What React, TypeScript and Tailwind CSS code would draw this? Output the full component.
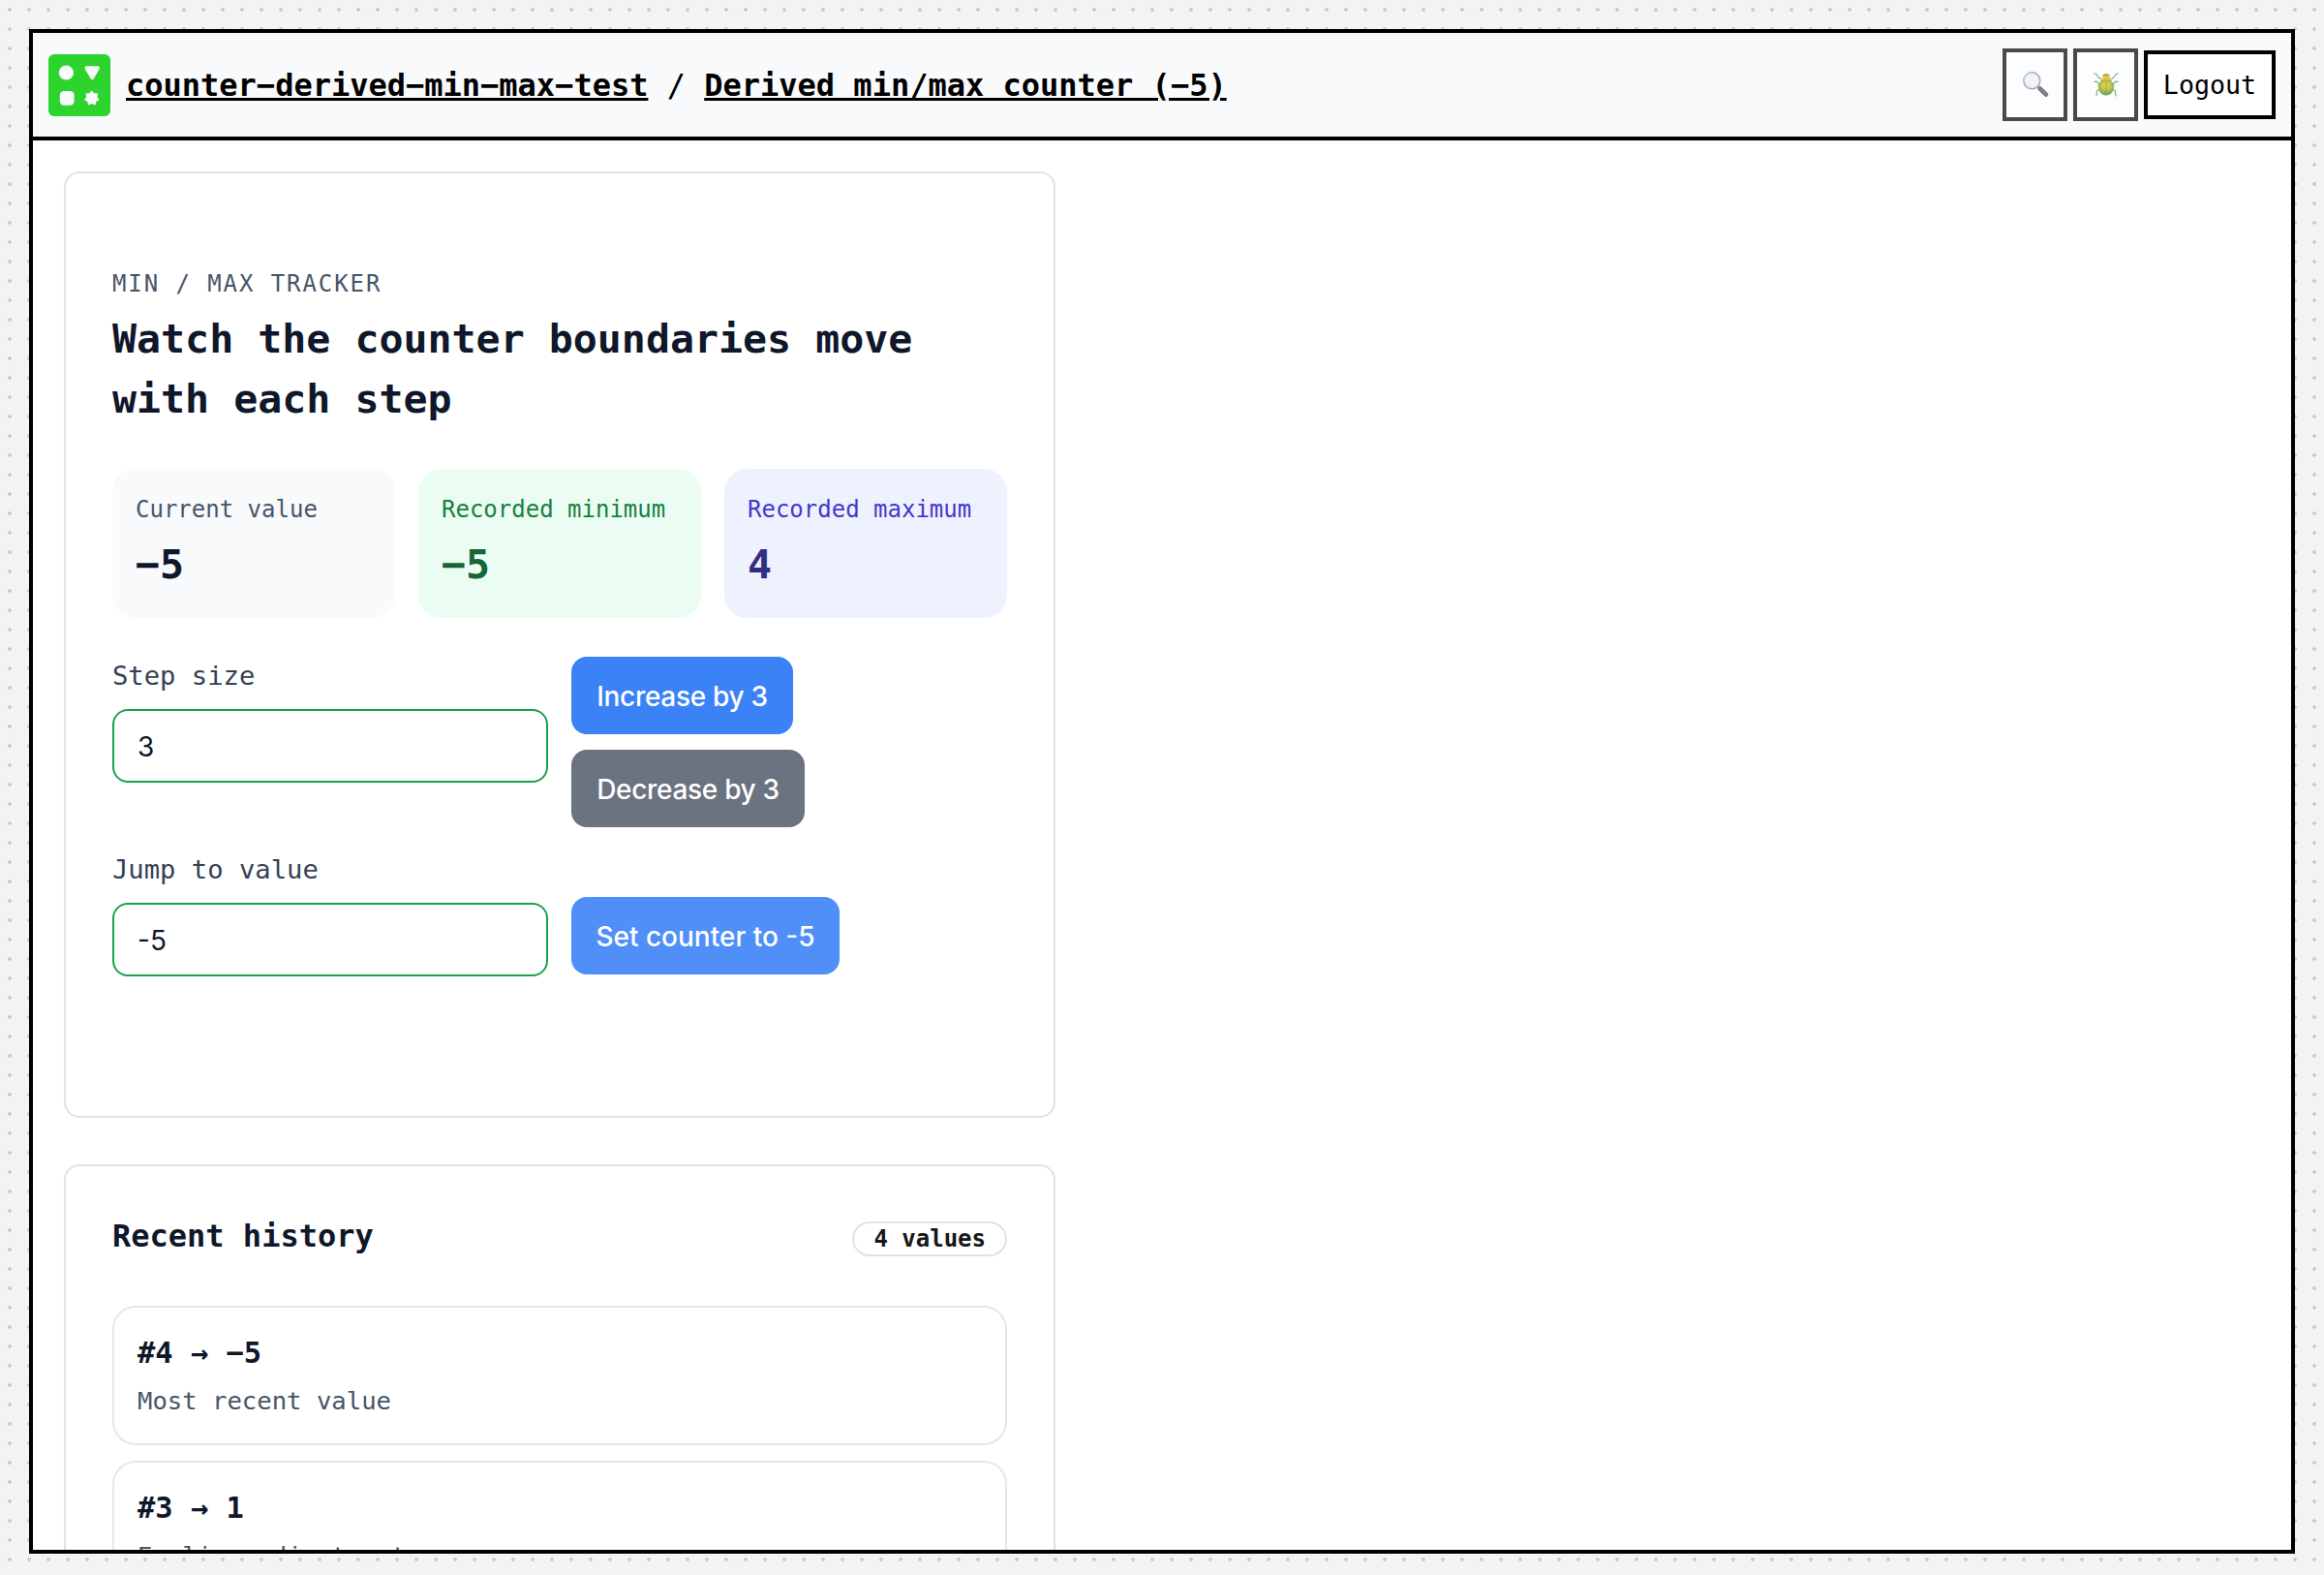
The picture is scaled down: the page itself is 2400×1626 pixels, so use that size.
import type { ReactNode } from "react";

function Logo() {
  return (
    <svg viewBox="0 0 64 64" className="size-16 shrink-0">
      <rect width="64" height="64" rx="6" fill="#2dd42d" />
      <g fill="#f8fafc" stroke="#f8fafc" strokeLinejoin="round">
        <circle cx="18.4" cy="19" r="7.6" stroke="none" />
        <path d="M39.2 14 L51.2 14 L45.2 24.3 Z" strokeWidth="3.6" />
        <rect x="11.8" y="38" width="14.8" height="14.8" rx="4.2" stroke="none" />
        <path
          d="M44.8 38.4 L47 40.9 L50.3 41 L49.7 44.3 L51.6 47 L48.7 48.5 L47.8 51.7 L44.8 50.4 L41.8 51.7 L40.9 48.5 L38 47 L39.9 44.3 L39.3 41 L42.6 40.9 Z"
          strokeWidth="1.4"
        />
      </g>
    </svg>
  );
}

function MagnifierIcon() {
  return (
    <svg viewBox="0 0 28 28" className="size-7">
      <defs>
        <linearGradient id="rim" x1="0" y1="0" x2="1" y2="1">
          <stop offset="0" stopColor="#a9bdd6" />
          <stop offset="0.4" stopColor="#85898e" />
          <stop offset="1" stopColor="#7f8285" />
        </linearGradient>
        <linearGradient id="grip" gradientUnits="userSpaceOnUse" x1="20.2" y1="22.4" x2="23.8" y2="18.6">
          <stop offset="0" stopColor="#17191a" />
          <stop offset="0.5" stopColor="#5c6064" />
          <stop offset="1" stopColor="#1c1e20" />
        </linearGradient>
      </defs>
      <path d="M16 14.6 L19 17.6" stroke="#777b7f" strokeWidth="2" />
      <path d="M18.6 17.4 L25 23.6" stroke="url(#grip)" strokeWidth="4.4" strokeLinecap="round" />
      <circle cx="10.3" cy="9.2" r="8.5" fill="#eff1f4" stroke="url(#rim)" strokeWidth="1.5" />
    </svg>
  );
}

function BeetleIcon() {
  return (
    <svg viewBox="0 0 28 28" className="size-7">
      <defs>
        <radialGradient id="shell" cx="0.5" cy="0.3" r="0.7">
          <stop offset="0" stopColor="#f3c300" />
          <stop offset="0.4" stopColor="#b3b400" />
          <stop offset="0.75" stopColor="#559a10" />
          <stop offset="1" stopColor="#2b7d12" />
        </radialGradient>
      </defs>
      <g fill="none" stroke="#5f8f42" strokeWidth="1.2" strokeLinecap="round" strokeLinejoin="round">
        <path d="M8.4 7.4 L5.4 5.2 L4.2 2.8 L1.8 1.8" />
        <path d="M19.6 7.4 L22.6 5.2 L23.8 2.8 L26.2 1.8" />
        <path d="M6.4 12.6 L4.4 10.2 L2 10.4" />
        <path d="M21.6 12.6 L23.6 10.2 L26 10.4" />
        <path d="M7 18.4 L4.4 19.8 L4.6 22.6 L3.8 25" />
        <path d="M21 18.4 L23.6 19.8 L23.4 22.6 L24.2 25" />
      </g>
      <path d="M10.2 4.8 C10.4 1 17.6 1 17.8 4.8 Z" fill="#6f8f12" />
      <path d="M8.6 9.8 C8.8 2.8 19.2 2.8 19.4 9.8 Z" fill="#dcb400" />
      <path
        d="M5.8 13 C6 8.2 22 8.2 22.2 13 C22.8 18.8 19.6 24.6 14 24.6 C8.4 24.6 5.2 18.8 5.8 13 Z"
        fill="url(#shell)"
      />
      <path d="M14 10.4 V23.8" stroke="#7a5c00" strokeWidth="0.7" />
      <path d="M8 10 C11 8.8 17 8.8 20 10" fill="none" stroke="#4f7a10" strokeWidth="0.9" />
    </svg>
  );
}

function IconButton({ label, children }: { label: string; children: ReactNode }) {
  return (
    <button
      aria-label={label}
      className="flex h-[75px] w-[67px] items-center justify-center border-4 border-black bg-white opacity-70"
    >
      {children}
    </button>
  );
}

function Stat({ label, value, box, labelColor, valueColor }: {
  label: string;
  value: string;
  box: string;
  labelColor: string;
  valueColor: string;
}) {
  return (
    <div className={`flex h-[154px] flex-col gap-2 rounded-3xl p-6 ${box}`}>
      <div className={`text-[24px] leading-[36px] whitespace-nowrap ${labelColor}`}>{label}</div>
      <div className={`text-[41.6px] leading-[62.4px] font-bold ${valueColor}`}>{value}</div>
    </div>
  );
}

function Field({ label, value }: { label: string; value: string }) {
  return (
    <label className="flex flex-col">
      <span className="text-[27.2px] leading-[40.8px] text-[#334155]">{label}</span>
      <span className="mt-[13.2px] flex h-[76px] items-center rounded-2xl border-2 border-[#16a34a] px-6 pt-0.5 font-[Inter,sans-serif] text-[28px] text-[#0f172a]">
        {value}
      </span>
    </label>
  );
}

const history = [
  { title: "#4 → −5", note: "Most recent value" },
  { title: "#3 → 1", note: "Earlier adjustment" },
];

export default function App() {
  return (
    <div className="h-[1626px] w-[2400px] overflow-hidden bg-[#f3f3f3] bg-[radial-gradient(circle,#cccccc_2px,transparent_2px)] bg-[size:20px_20px] p-[30px] font-['DejaVu_Sans_Mono',monospace] text-black">
      <div className="flex h-[1574px] flex-col overflow-hidden border-4 border-black bg-white">
        <header className="flex h-[111px] shrink-0 items-center border-b-4 border-black bg-[#f8fafc] px-4">
          <Logo />
          <div className="ml-4 text-[32px] leading-[48px] whitespace-pre">
            <a className="font-bold underline decoration-[3px] underline-offset-[2px]">counter−derived−min−max−test</a>
            {" / "}
            <a className="font-bold underline decoration-[3px] underline-offset-[2px]">Derived min/max counter (−5)</a>
          </div>
          <div className="ml-auto flex items-center gap-1.5">
            <IconButton label="Search">
              <MagnifierIcon />
            </IconButton>
            <IconButton label="Report a bug">
              <BeetleIcon />
            </IconButton>
            <button className="h-[71px] w-[136px] border-4 border-black bg-white text-[26.667px] leading-[31px]">
              Logout
            </button>
          </div>
        </header>

        <main className="flex w-[1056px] flex-col gap-12 pt-8 pl-8">
          <section className="h-[977px] shrink-0 rounded-2xl border-2 border-[#e2e2e2] px-12 py-24">
            <div className="text-[24px] leading-[36px] tracking-[0.08em] text-[#475569]">MIN / MAX TRACKER</div>
            <h1 className="mt-2 text-[41.6px] leading-[62.4px] font-bold text-[#0f172a]">
              Watch the counter boundaries move with each step
            </h1>
            <div className="mt-10 grid grid-cols-3 gap-6">
              <Stat label="Current value" value="−5" box="bg-[#f8fafc]" labelColor="text-[#475569]" valueColor="text-[#0f172a]" />
              <Stat label="Recorded minimum" value="−5" box="bg-[#ebfdf3]" labelColor="text-[#15803d]" valueColor="text-[#166534]" />
              <Stat label="Recorded maximum" value="4" box="bg-[#eef2ff]" labelColor="text-[#4338ca]" valueColor="text-[#312e81]" />
            </div>
            <div className="mt-10 grid grid-cols-2 gap-6">
              <Field label="Step size" value="3" />
              <div className="flex flex-col items-start gap-4 font-[Inter,sans-serif] text-[28px] font-medium tracking-[-0.3px] text-white">
                <button className="h-20 w-[229px] rounded-2xl bg-[#3b82f6] pt-0.5">Increase by 3</button>
                <button className="h-20 w-[241px] rounded-2xl bg-[#6b7280] pt-0.5">Decrease by 3</button>
              </div>
              <Field label="Jump to value" value="-5" />
              <div className="flex items-end pb-0.5 font-[Inter,sans-serif] text-[28px] font-medium text-white">
                <button className="h-20 w-[277px] rounded-2xl bg-[#4f8ff7] pt-0.5">Set counter to -5</button>
              </div>
            </div>
          </section>

          <section className="h-[800px] shrink-0 rounded-2xl border-2 border-[#e2e2e2] p-12">
            <div className="flex items-baseline justify-between">
              <h2 className="text-[32px] leading-[48px] font-bold text-[#0f172a]">Recent history</h2>
              <span className="h-9 rounded-full border-2 border-[#e2e2e2] px-5 text-[24px] leading-[32px] font-bold text-[#171717]">
                4 values
              </span>
            </div>
            <div className="mt-12 flex flex-col gap-4">
              {history.map((item) => (
                <div key={item.title} className="h-36 rounded-3xl border-2 border-[#e2e8f0] p-6">
                  <div className="text-[30.4px] leading-[45.6px] font-bold text-[#0f172a]">{item.title}</div>
                  <div className="mt-[7px] text-[25.6px] leading-[38.4px] text-[#475569]">{item.note}</div>
                </div>
              ))}
            </div>
          </section>
        </main>
      </div>
    </div>
  );
}
